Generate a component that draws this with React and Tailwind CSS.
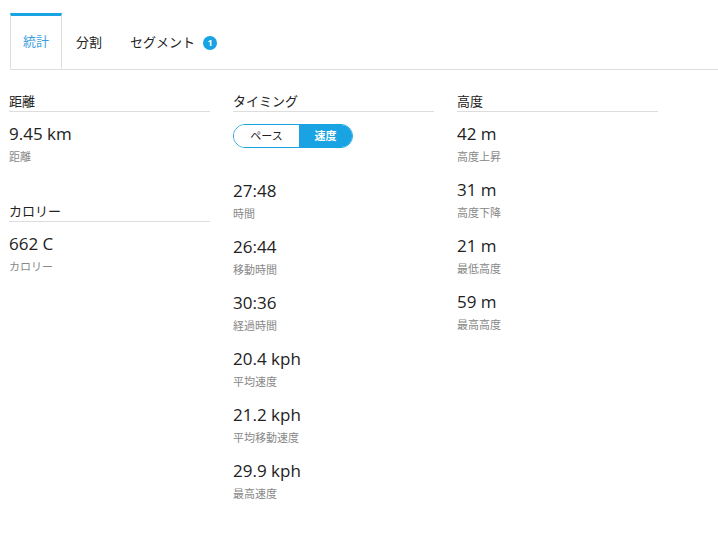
import React, { useState } from "react";

const FONT = {
  fontFamily: '"Open Sans", "Noto Sans CJK JP", sans-serif',
};

const Header = ({ children }) => (
  <div className="text-[13px] leading-[16px] text-[#222] pb-[2px] border-b border-[#dddddd]">
    {children}
  </div>
);

const Stat = ({ value, label }) => (
  <div className="mb-[15px]">
    <div className="text-[17px] leading-[22px] text-[#222]">{value}</div>
    <div className="text-[11px] leading-[14px] text-[#888] mt-[5px]">{label}</div>
  </div>
);

const Tab = ({ active, first, children, onClick }) => {
  const pad = first ? "px-[12px]" : "px-[13px]";
  return (
    <button
      onClick={onClick}
      className={
        active
          ? `flex items-center h-[56px] ${pad} text-[13px] text-[#3aa0dd] bg-white border-x border-[#dddddd] border-t-[3px] border-t-[#19a3e3] -mb-px border-b border-b-white`
          : `flex items-center h-[56px] ${pad} text-[13px] text-[#222] border-x border-transparent border-t-[3px] border-t-transparent`
      }
    >
      {children}
    </button>
  );
};

export default function App() {
  const [tab, setTab] = useState("stats");
  const [mode, setMode] = useState("speed");

  const timing = [
    ["27:48", "時間"],
    ["26:44", "移動時間"],
    ["30:36", "経過時間"],
    ["20.4 kph", "平均速度"],
    ["21.2 kph", "平均移動速度"],
    ["29.9 kph", "最高速度"],
  ];

  const altitude = [
    ["42 m", "高度上昇"],
    ["31 m", "高度下降"],
    ["21 m", "最低高度"],
    ["59 m", "最高高度"],
  ];

  return (
    <div className="w-[718px] h-[534px] bg-white pt-[13px]" style={FONT}>
      <div className="flex ml-[10px] border-b border-[#dddddd]">
        <Tab first active={tab === "stats"} onClick={() => setTab("stats")}>
          統計
        </Tab>
        <Tab active={tab === "splits"} onClick={() => setTab("splits")}>
          分割
        </Tab>
        <Tab active={tab === "segments"} onClick={() => setTab("segments")}>
          セグメント
          <span className="ml-[8px] w-[14px] h-[14px] rounded-full bg-[#19a3e3] text-white text-[9px] font-bold flex items-center justify-center">
            1
          </span>
        </Tab>
      </div>

      <div className="flex gap-[23px] pl-[9px] pt-[23px]">
        <div className="w-[201px] flex flex-col">
          <Header>距離</Header>
          <div className="mt-[11px]">
            <Stat value="9.45 km" label="距離" />
          </div>
          <div className="mt-[24px]">
            <Header>カロリー</Header>
          </div>
          <div className="mt-[11px]">
            <Stat value="662 C" label="カロリー" />
          </div>
        </div>

        <div className="w-[201px] flex flex-col">
          <Header>タイミング</Header>
          <div className="mt-[12px] flex w-[120px] h-[24px] rounded-full border border-[#19a3e3] overflow-hidden text-[11px]">
            <button
              onClick={() => setMode("pace")}
              className={
                mode === "pace"
                  ? "w-[65px] bg-[#19a3e3] text-white font-bold"
                  : "w-[65px] bg-white text-[#222]"
              }
            >
              ペース
            </button>
            <button
              onClick={() => setMode("speed")}
              className={
                mode === "speed"
                  ? "flex-1 bg-[#19a3e3] text-white font-bold"
                  : "flex-1 bg-white text-[#222]"
              }
            >
              速度
            </button>
          </div>
          <div className="mt-[32px]">
            {timing.map(([v, l]) => (
              <Stat key={l} value={v} label={l} />
            ))}
          </div>
        </div>

        <div className="w-[201px] flex flex-col">
          <Header>高度</Header>
          <div className="mt-[11px]">
            {altitude.map(([v, l]) => (
              <Stat key={l} value={v} label={l} />
            ))}
          </div>
        </div>
      </div>
    </div>
  );
}
